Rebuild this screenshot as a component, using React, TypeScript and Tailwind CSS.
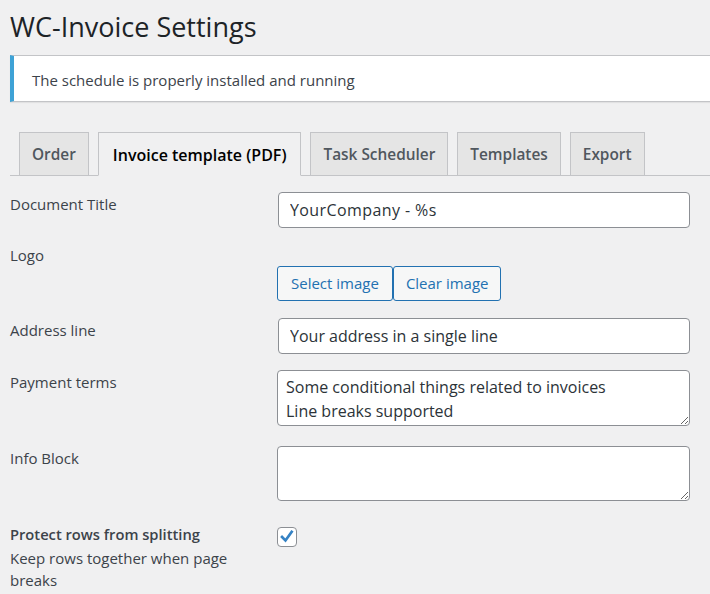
import React from "react";

const font = { fontFamily: '"Open Sans", "Noto Sans", "Liberation Sans", sans-serif' };

function Tab({ label, active }: { label: string; active?: boolean }) {
  return (
    <div
      className={
        "ml-[9px] h-[44px] -mb-px pt-[2px] flex items-center border border-[#c3c4c7] font-semibold " +
        (active
          ? "px-[14px] text-[16px] bg-[#f0f0f1] border-b-[#f0f0f1] text-[#000000]"
          : "px-[12px] text-[15.4px] bg-[#e5e5e5] text-[#50575e]")
      }
    >
      {label}
    </div>
  );
}

function Label({ children }: { children: React.ReactNode }) {
  return <div className="w-[267px] shrink-0 pr-[20px] text-[15px] leading-5 text-[#3c434a] mt-[2px]">{children}</div>;
}

export default function App() {
  return (
    <div className="min-h-[594px] w-[710px] overflow-hidden bg-[#f0f0f1]" style={font}>
      <div className="pl-[10px] pt-[11px]">
        <h1 className="text-[27px] leading-8 text-[#1d2327] font-normal">WC-Invoice Settings</h1>
      </div>
      <div className="mt-[12px] ml-[10px] h-[47px] bg-white border border-[#c3c4c7] border-r-0 border-l-4 border-l-[#3ea2d6] shadow-[0_1px_1px_rgba(0,0,0,0.06)] flex items-center pl-[18px] pt-[3px] text-[15px] text-[#3c434a]">
        The schedule is properly installed and running
      </div>
      <div className="mt-[30px] ml-[10px] flex items-end border-b border-[#c3c4c7] h-[44px]">
        <Tab label="Order" />
        <Tab label="Invoice template (PDF)" active />
        <Tab label="Task Scheduler" />
        <Tab label="Templates" />
        <Tab label="Export" />
      </div>

      <div className="pl-[10px] pr-[20px]">
        {/* Document Title */}
        <div className="flex pt-[16px]">
          <Label>Document Title</Label>
          <input
            readOnly
            value="YourCompany - %s"
            className="ml-[1px] flex-1 h-[36px] rounded-[4px] border border-[#8c8f94] bg-white px-[11px] text-[16px] tracking-[0.4px] text-[#2c3338] outline-none"
          />
        </div>
        {/* Logo */}
        <div className="flex mt-[15px]">
          <Label>Logo</Label>
          <div className="flex pt-[23px]">
            <button className="h-[35px] px-[13px] rounded-[3px] border border-[#2271b1] bg-[#f6f7f7] text-[#2271b1] text-[15px]">
              Select image
            </button>
            <button className="h-[35px] px-[12px] rounded-[3px] border border-[#2271b1] bg-[#f6f7f7] text-[#2271b1] text-[15px]">
              Clear image
            </button>
          </div>
        </div>
        {/* Address */}
        <div className="flex mt-[17px]">
          <Label>Address line</Label>
          <input
            readOnly
            value="Your address in a single line"
            className="ml-[1px] flex-1 h-[36px] rounded-[4px] border border-[#8c8f94] bg-white px-[11px] text-[16px] text-[#2c3338] outline-none"
          />
        </div>
        {/* Payment terms */}
        <div className="flex mt-[16px]">
          <Label>Payment terms</Label>
          <textarea
            readOnly
            value={"Some conditional things related to invoices\nLine breaks supported"}
            className="flex-1 h-[56px] rounded-[4px] border border-[#8c8f94] bg-white px-[8px] pt-[4px] text-[16px] leading-6 text-[#2c3338] outline-none resize-y"
          />
        </div>
        {/* Info block */}
        <div className="flex mt-[20px]">
          <Label>Info Block</Label>
          <textarea
            readOnly
            value=""
            className="flex-1 h-[55px] rounded-[4px] border border-[#8c8f94] bg-white px-[8px] pt-[4px] text-[16px] leading-6 text-[#2c3338] outline-none resize-y"
          />
        </div>
        {/* Protect rows */}
        <div className="flex mt-[23px]">
          <div className="w-[267px] shrink-0 pr-[22px] text-[#3c434a]">
            <div className="text-[14.7px] leading-5 font-semibold text-[#3c434a]">Protect rows from splitting</div>
            <div className="text-[15px] leading-[22px] mt-[3px] w-[240px]">Keep rows together when page breaks</div>
          </div>
          <div className="mt-[3px] w-[20px] h-[20px] rounded-[4px] border border-[#8c8f94] bg-white flex items-center justify-center">
            <svg width="20" height="20" viewBox="0 0 20 20">
              <polyline points="4.5,10 8.3,13.8 15.2,4.2" fill="none" stroke="#3582c4" strokeWidth="3" strokeLinecap="square" strokeLinejoin="miter" />
            </svg>
          </div>
        </div>
      </div>
    </div>
  );
}
